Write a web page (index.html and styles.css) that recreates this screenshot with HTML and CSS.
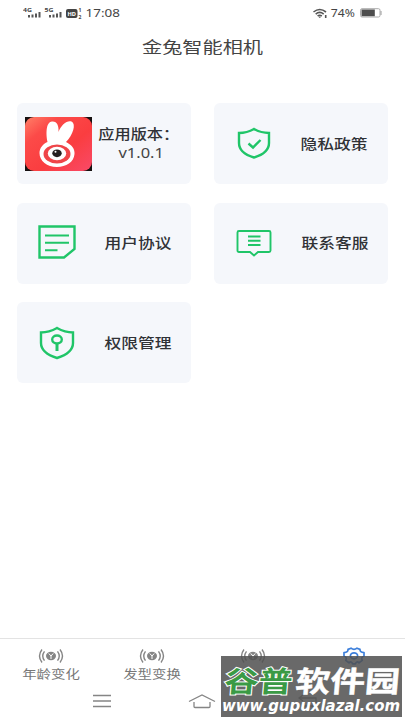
FILE: index.html
```
<!DOCTYPE html>
<html lang="zh-CN">
<head>
<meta charset="utf-8">
<title>金兔智能相机</title>
<link rel="stylesheet" href="styles.css">
</head>
<body>
<div class="app">
  <header class="status">
    <svg class="signals" width="60" height="14" viewBox="0 0 60 14">
      <g class="tiny"><text x="0" y="6" textLength="9" lengthAdjust="spacingAndGlyphs">4G</text><text x="21.5" y="6" textLength="9" lengthAdjust="spacingAndGlyphs">5G</text></g>
      <path d="M6 9v2.500M9.500 8.500v3M13 7.500v4M16.500 6v5.500M27 9v2.500M30.500 8.500v3M34 7.500v4M37.500 6v5.500" stroke="#555" stroke-width="2"/>
      <rect x="43" y="3" width="11.500" height="9" rx="2" fill="#444"/>
      <text class="hd" x="44.500" y="9.700" textLength="8.500" lengthAdjust="spacingAndGlyphs">HD</text>
      <g class="sim"><text x="55.500" y="6">1</text><text x="55.500" y="12.500">2</text></g>
    </svg>
    <span class="clock"><span class="wide">17:08</span></span>
    <svg class="wifi" width="15" height="11" viewBox="0 0 15 11" fill="none" stroke="#555" stroke-width="1.600">
      <path d="M.5 4Q6.700-1 13 4M2.700 6.100Q6.700 2.800 10.700 6.100M4.600 8Q6.700 6.400 8.800 8"/><path d="M6.700 8.400v1.400M12.700 7v3"/>
    </svg>
    <span class="percent"><span class="wide">74%</span></span>
    <svg width="23" height="10" viewBox="0 0 23 10"><rect x=".5" y=".7" width="19.500" height="8.300" rx="1.500" fill="#fff" stroke="#aaa"/><rect x="1.500" y="1.500" width="13.300" height="6.700" fill="#4d4d4d"/><path d="M21 3v4" stroke="#aaa" stroke-width="1.200"/></svg>
  </header>
  <h1 class="title"><span class="wide">金兔智能相机</span></h1>

  <main class="grid">
    <section class="card">
      <svg class="logo" width="67" height="54" viewBox="0 0 67 54">
        <defs><linearGradient id="red" x1="0" y1="0" x2="1" y2="1"><stop offset="0" stop-color="#ff8068"/><stop offset=".25" stop-color="#fc4a48"/><stop offset=".6" stop-color="#fa3d40"/><stop offset="1" stop-color="#f94a68"/></linearGradient></defs>
        <path fill="#161010" d="M0 0h67v54H0z"/><rect width="67" height="54" rx="9" fill="url(#red)"/>
        <path fill="#fff" d="M22.500 25C21 18 20.500 5 27 4.500C32 4 34 9 33.500 15C36 8 42 3 46.500 4.500C51.500 7 48 18 41 25C47 28 50 32 49.500 37C49 45 41 50 32 50C22 50 14.500 44 14.500 36C14.500 31 18 27 22.500 25Z"/>
        <ellipse cx="32" cy="37" rx="13.500" ry="9.500" fill="#ef4549"/>
        <ellipse cx="32" cy="36.500" rx="9.200" ry="6.800" fill="#fff"/><ellipse cx="32" cy="36.300" rx="4.700" ry="3.900" fill="#252020"/><circle cx="30.500" cy="34.700" r="1" fill="#fff"/>
      </svg>
      <div class="label version"><span class="wide">应用版本：</span><span class="wide number">v1.0.1</span></div>
    </section>
    <section class="card">
      <svg class="icon up" width="36" height="34" viewBox="0 0 36 34"><path d="M18 3Q25 7 33 7V17Q33 27 18 31.500Q3 27 3 17V7Q11 7 18 3Z"/><path d="M12.500 17.500l4.500 4 7.500-7.500"/></svg>
      <div class="label privacy"><span class="wide">隐私政策</span></div>
    </section>
    <section class="card">
      <svg class="icon up" width="40" height="36" viewBox="0 0 40 36"><path d="M2.500 2.500h35V25L27 33.500H2.500Z"/><path d="M8 11.500h24M8 18.700h24M8 26.300h12.500" stroke-width="2"/></svg>
      <div class="label"><span class="wide">用户协议</span></div>
    </section>
    <section class="card">
      <svg class="icon chat" width="36" height="28" viewBox="0 0 36 28"><path d="M3 2h30q1.500 0 1.500 1.500v18q0 1.500-1.500 1.500H22l-4 3.500-4-3.500H3q-1.500 0-1.500-1.500v-18Q1.500 2 3 2Z"/><path d="M12 7.500h12.500M12 11.800h12.500M12 16h12.500"/></svg>
      <div class="label"><span class="wide">联系客服</span></div>
    </section>
    <section class="card">
      <svg class="icon" width="38" height="36" viewBox="0 0 38 36"><path d="M19 3Q27 7.500 35 7.500V18Q35 28 19 33Q3 28 3 18V7.500Q11 7.500 19 3Z"/><ellipse cx="19" cy="14.500" rx="4.800" ry="4"/><path d="M19 18.500v7.500" stroke-width="3"/></svg>
      <div class="label"><span class="wide">权限管理</span></div>
    </section>
  </main>

  <svg class="defs" width="0" height="0"><symbol id="coin" viewBox="0 0 26 18">
    <ellipse cx="13" cy="9" rx="5" ry="4.200" fill="#858585"/><path d="M10.800 6.500l2.200 2.500 2.200-2.500M13 9v3" fill="none" stroke="#fff" stroke-width="1"/>
    <path d="M6.500 4.300Q3 9 6.500 13.700M19.500 4.300Q23 9 19.500 13.700M4 2.500Q-1 9 4 15.500M22 2.500Q27 9 22 15.500" fill="none" stroke="#858585" stroke-width="1.400"/>
  </symbol></svg>
  <nav class="tabs">
    <div class="tab"><svg width="26" height="18"><use href="#coin"/></svg><span class="wide">年龄变化</span></div>
    <div class="tab"><svg width="26" height="18"><use href="#coin"/></svg><span class="wide">发型变换</span></div>
    <div class="tab"><svg width="26" height="18"><use href="#coin"/></svg></div>
    <div class="tab"><svg width="24" height="18" viewBox="0 0 24 18" fill="none" stroke="#3c7fdb" stroke-width="1.700" stroke-linejoin="round"><path d="M9 1.200Q12 3.500 15 1.200L18 2.400Q17.600 5.300 22 5.600V9Q18.500 10.400 20.300 13.400L17 15.800Q14.500 13.700 13.500 16.800H10.500Q9.500 13.700 7 15.800L3.700 13.400Q5.500 10.400 2 9V5.600Q6.400 5.300 6 2.400Z"/><ellipse cx="12" cy="8.800" rx="3.600" ry="3"/></svg></div>
  </nav>
  <footer class="system">
    <svg width="20" height="14" viewBox="0 0 20 14"><path d="M1 1.500h18M1 7h18M1 12.500h18"/></svg>
    <svg class="home" width="28" height="15" viewBox="0 0 28 15"><path d="M1 7.500L14 1l13 6.500M6 8v4.500q0 1 1 1h14q1 0 1-1V8"/></svg>
    <svg width="22" height="14" viewBox="0 0 22 14"><path d="M6 1L2 4l4 3M2 4h17v8H7"/></svg>
  </footer>

  <aside class="watermark">
    <svg width="181" height="61" viewBox="0 0 181 61">
      <g transform="skewX(-5)"><text class="brand green" x="6" y="36" textLength="68" lengthAdjust="spacingAndGlyphs">谷普</text><text class="brand" x="77" y="36" textLength="104" lengthAdjust="spacingAndGlyphs">软件园</text></g>
      <text class="url" x="1" y="55" textLength="178" lengthAdjust="spacingAndGlyphs">www.gupuxlazal.com</text>
    </svg>
  </aside>
</div>
</body>
</html>
```
FILE: styles.css
```
* { box-sizing: border-box; }
body { margin: 0; background: #fff; color: #303236; font-family: "Noto Sans", "Noto Sans CJK SC", sans-serif; }
svg { display: block; flex: none; }
.app { position: relative; width: 405px; height: 720px; display: flex; flex-direction: column; overflow: hidden; }
.wide { display: block; white-space: nowrap; transform: scaleX(1.24); }

.status { height: 26px; padding: 0 22px 0 23px; display: flex; align-items: center; color: #444; }
.tiny { font-size: 6px; font-weight: 700; fill: #444; }
.hd { font-size: 6px; font-weight: 700; fill: #fff; }
.sim { font-size: 5px; font-weight: 700; fill: #444; }
.clock { width: 36px; margin: 0 auto 0 2px; font-size: 11.5px; line-height: 14px; display: flex; justify-content: center; }
.clock .wide { transform: scaleX(1.17); }
.percent { width: 24px; margin: 0 5px 0 3px; display: flex; justify-content: center; font-size: 10px; line-height: 12px; }
.percent .wide { transform: scaleX(1.22); }

.title { margin: 0; height: 77px; padding-top: 10px; display: flex; justify-content: center; font-size: 15.5px; line-height: 23px; font-weight: 400; color: #444; }
.title .wide { transform: scaleX(1.3); }

.grid { display: grid; grid-template-columns: 174px 174px; grid-auto-rows: 81px; gap: 18.5px 23px; padding-left: 17px; }
.card { display: grid; grid-template-columns: 80px 82px; align-items: center; justify-items: center; background: #f5f7fb; border-radius: 6px; }
.logo { margin-left: 2px; }
.icon { fill: none; stroke: #20c568; stroke-width: 2.4; }
.up { margin-bottom: 2px; }
.chat { stroke-width: 1.9; }
.label { display: flex; flex-direction: column; align-items: center; padding-top: 1px; font-size: 13.5px; line-height: 19px; font-weight: 500; }
.privacy { padding-right: 2px; }
.version { padding-left: 1px; }
.version .wide { transform: scaleX(1.2); }
.version .number { padding-left: 5px; font-weight: 400; transform: scaleX(1.22); color: #444; }

.defs { position: absolute; }
.tabs { margin-top: auto; height: 49px; border-top: 1px solid #e3e3e3; display: grid; grid-template-columns: repeat(4, 1fr); padding-top: 8px; }
.tab { display: flex; flex-direction: column; align-items: center; color: #777; font-size: 12px; line-height: 19px; }
.tab .wide { transform: scaleX(1.2); }
.system { height: 33px; padding: 7px 86px 0 92px; display: flex; justify-content: space-between; }
.system svg { fill: none; stroke: #858585; stroke-width: 1.3; }
.system .home { margin-right: 5px; }

.watermark { position: absolute; left: 221px; top: 656px; width: 181px; height: 61px; background: rgba(80, 80, 80, .86); }
.brand { font: 700 29px "Noto Sans CJK SC", sans-serif; fill: #fff; stroke: #fff; stroke-width: .5px; }
.green { fill: #3a9a45; stroke-width: 2px; paint-order: stroke; }
.url { font: italic 700 15px "DejaVu Sans", sans-serif; fill: #fff; }
```
